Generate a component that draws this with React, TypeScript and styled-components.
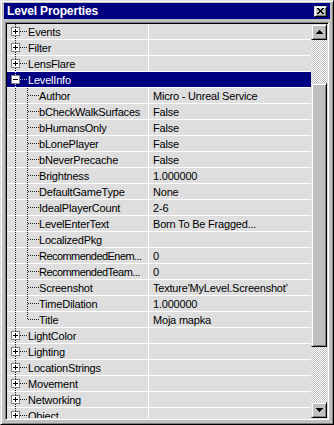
import React from 'react'
import styled, { createGlobalStyle } from 'styled-components'

const colors = {
  face: '#c0c0c0',
  light: '#dfdfdf',
  white: '#ffffff',
  shadow: '#808080',
  dark: '#000000',
  navy: '#000080',
  row: '#dedede',
  tree: '#202020',
}

const GlobalStyle = createGlobalStyle`
  html, body {
    margin: 0;
    padding: 0;
    background: ${colors.face};
  }
  body {
    font-family: 'Liberation Sans', Arial, sans-serif;
    font-size: 11px;
  }
`

const Window = styled.div`
  box-sizing: border-box;
  width: 334px;
  height: 425px;
  display: flex;
  flex-direction: column;
  padding: 2px 3px 4px 3px;
  background: ${colors.face};
  border: 1px solid;
  border-color: ${colors.light} ${colors.dark} ${colors.dark} ${colors.light};
  box-shadow: inset 1px 1px ${colors.white}, inset -1px -1px ${colors.shadow};
  overflow: hidden;
`

const TitleBar = styled.div`
  height: 16px;
  flex: none;
  display: flex;
  align-items: center;
  justify-content: space-between;
  padding: 0 3px 0 3px;
  background: ${colors.navy};
  color: ${colors.white};
`

const Title = styled.span`
  font-weight: 700;
  font-size: 12px;
  letter-spacing: -0.15px;
  line-height: 15px;
  padding-top: 1px;
`

const Raised = styled.div`
  box-sizing: border-box;
  background: ${colors.face};
  border: 1px solid;
  border-color: ${colors.light} ${colors.dark} ${colors.dark} ${colors.light};
  box-shadow: inset 1px 1px ${colors.white}, inset -1px -1px ${colors.shadow};
  display: flex;
  align-items: center;
  justify-content: center;
`

const CloseButton = styled(Raised)`
  width: 13px;
  height: 11px;
`

const Panel = styled.div`
  flex: 1;
  min-height: 0;
  margin: 3px 1px 0 1px;
  display: flex;
  border: 1px solid;
  border-color: ${colors.shadow} ${colors.white} ${colors.white} ${colors.shadow};
  box-shadow: inset 1px 1px ${colors.dark}, inset -1px -1px ${colors.light};
  padding: 1px;
`

const List = styled.div`
  flex: 1;
  overflow: hidden;
  background: ${colors.row};
`

const RowBox = styled.div<{ $selected?: boolean }>`
  box-sizing: border-box;
  height: 16px;
  display: flex;
  border-bottom: 1px solid ${colors.white};
  background: ${p => (p.$selected ? colors.navy : colors.row)};
  color: ${p => (p.$selected ? colors.white : colors.dark)};
`

const NameCell = styled.div<{ $selected?: boolean }>`
  box-sizing: border-box;
  width: 142px;
  flex: none;
  display: flex;
  border-right: 1px solid ${p => (p.$selected ? colors.navy : colors.white)};
  overflow: hidden;
`

const TreeSvg = styled.svg`
  flex: none;
  display: block;
`

const Label = styled.span<{ $tight?: boolean }>`
  flex: 1;
  white-space: nowrap;
  line-height: 14px;
  padding-top: 1px;
  letter-spacing: ${p => (p.$tight ? '-0.55px' : '-0.2px')};
`

const Value = styled.span`
  flex: 1;
  white-space: nowrap;
  overflow: hidden;
  line-height: 14px;
  padding: 1px 0 0 4px;
  letter-spacing: -0.2px;
`

const ScrollBar = styled.div`
  width: 16px;
  flex: none;
  display: flex;
  flex-direction: column;
`

const ScrollButton = styled(Raised)`
  width: 16px;
  height: 16px;
  flex: none;
`

const Track = styled.div<{ $size?: number }>`
  flex: ${p => (p.$size ? `0 0 ${p.$size}px` : '1')};
  background: repeating-conic-gradient(${colors.face} 0 25%, ${colors.white} 0 50%) 0 0 / 2px 2px;
`

const Thumb = styled(Raised)`
  width: 16px;
  height: 264px;
  flex: none;
`

type Kind = 'node' | 'open' | 'child' | 'last'

// dotted tree guides + the expand box
function Gutter ({ kind, selected }: { kind: Kind, selected?: boolean }) {
  const line = selected ? colors.face : colors.tree
  const isChild = kind === 'child' || kind === 'last'
  return (
    <TreeSvg width={isChild ? 32 : 21} height={15} shapeRendering='crispEdges'>
      <line x1={8.5} y1={0} x2={8.5} y2={15} stroke={line} strokeDasharray='1 1' />
      {isChild
        ? (
          <>
            <line x1={20.5} y1={0} x2={20.5} y2={kind === 'last' ? 8 : 15} stroke={line} strokeDasharray='1 1' />
            <line x1={21} y1={7.5} x2={32} y2={7.5} stroke={line} strokeDasharray='1 1' />
          </>
          )
        : (
          <>
            <line x1={13} y1={7.5} x2={21} y2={7.5} stroke={line} strokeDasharray='1 1' />
            <rect x={4.5} y={3.5} width={8} height={8} fill={colors.white} stroke={colors.shadow} />
            <line x1={6} y1={7.5} x2={11} y2={7.5} stroke={colors.dark} />
            {kind === 'node' && <line x1={8.5} y1={5} x2={8.5} y2={10} stroke={colors.dark} />}
          </>
          )}
    </TreeSvg>
  )
}

function Arrow ({ up }: { up?: boolean }) {
  return (
    <svg width={7} height={4} shapeRendering='crispEdges'>
      <polygon points={up ? '3.5,0 7,4 0,4' : '0,0 7,0 3.5,4'} fill={colors.dark} />
    </svg>
  )
}

const before = ['Events', 'Filter', 'LensFlare']
const after = ['LightColor', 'Lighting', 'LocationStrings', 'Movement', 'Networking', 'Object']

const levelInfo: [string, string][] = [
  ['Author', 'Micro - Unreal Service'],
  ['bCheckWalkSurfaces', 'False'],
  ['bHumansOnly', 'False'],
  ['bLonePlayer', 'False'],
  ['bNeverPrecache', 'False'],
  ['Brightness', '1.000000'],
  ['DefaultGameType', 'None'],
  ['IdealPlayerCount', '2-6'],
  ['LevelEnterText', 'Born To Be Fragged...'],
  ['LocalizedPkg', ''],
  ['RecommendedEnem...', '0'],
  ['RecommendedTeam...', '0'],
  ['Screenshot', "Texture'MyLevel.Screenshot'"],
  ['TimeDilation', '1.000000'],
  ['Title', 'Moja mapka'],
]

function Row ({ kind, name, value, selected }: { kind: Kind, name: string, value?: string, selected?: boolean }) {
  return (
    <RowBox $selected={selected}>
      <NameCell $selected={selected}>
        <Gutter kind={kind} selected={selected} />
        <Label $tight={name.endsWith('...')}>{name}</Label>
      </NameCell>
      <Value>{value}</Value>
    </RowBox>
  )
}

export default function App () {
  return (
    <>
      <GlobalStyle />
      <Window>
        <TitleBar>
          <Title>Level Properties</Title>
          <CloseButton>
            <svg width={7} height={6} shapeRendering='crispEdges'>
              <path d='M0 0h2v1h-2zM5 0h2v1h-2zM1 1h2v1h-2zM4 1h2v1h-2zM2 2h3v2h-3zM1 4h2v1h-2zM4 4h2v1h-2zM0 5h2v1h-2zM5 5h2v1h-2z' fill={colors.dark} />
            </svg>
          </CloseButton>
        </TitleBar>
        <Panel>
          <List>
            {before.map(n => <Row key={n} kind='node' name={n} />)}
            <Row kind='open' name='LevelInfo' selected />
            {levelInfo.map(([n, v], i) => (
              <Row key={n} kind={i === levelInfo.length - 1 ? 'last' : 'child'} name={n} value={v} />
            ))}
            {after.map(n => <Row key={n} kind='node' name={n} />)}
          </List>
          <ScrollBar>
            <ScrollButton><Arrow up /></ScrollButton>
            <Track $size={43} />
            <Thumb />
            <Track />
            <ScrollButton><Arrow /></ScrollButton>
          </ScrollBar>
        </Panel>
      </Window>
    </>
  )
}
